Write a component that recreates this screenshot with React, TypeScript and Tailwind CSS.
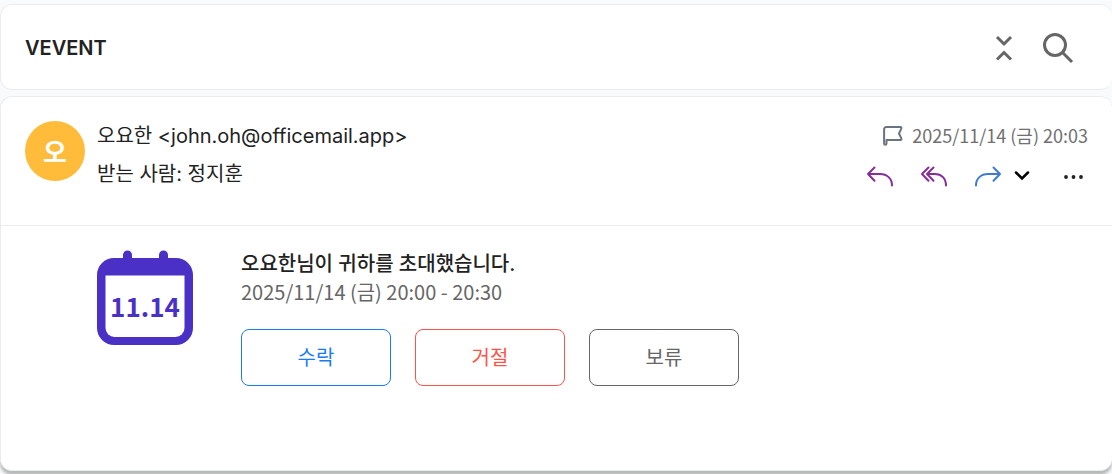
import type { ReactNode } from "react";

const ACTION_ICON =
  "h-7 w-7 fill-none stroke-[2] [stroke-linecap:round] [stroke-linejoin:round]";

function IconButton({
  label,
  className,
  children,
}: {
  label: string;
  className: string;
  children: ReactNode;
}) {
  return (
    <button type="button" aria-label={label} className={className}>
      {children}
    </button>
  );
}

function CalendarBadge({ date }: { date: string }) {
  return (
    <div className="relative h-24 w-24 shrink-0">
      <svg viewBox="0 0 96 96" className="h-24 w-24" aria-hidden="true">
        <rect x="26" y="0.500" width="9" height="20" rx="4.500" fill="#4b30c5" />
        <rect x="62" y="0.500" width="9" height="20" rx="4.500" fill="#4b30c5" />
        <rect x="0" y="8" width="96" height="87" rx="17" fill="#4b30c5" />
        <path
          d="M8.500 25.500h79v52.500a9 9 0 0 1-9 9h-61a9 9 0 0 1-9-9z"
          fill="#fff"
        />
      </svg>
      <span className="absolute inset-x-0 top-10 text-center font-['Noto_Sans_CJK_KR',sans-serif] text-[26px] leading-8 font-bold text-[#4b30c5]">
        {date}
      </span>
    </div>
  );
}

function MailToolbar() {
  return (
    <div className="flex items-center">
      <IconButton label="답장" className="mr-[26px] text-[#852e9a]">
        <svg viewBox="0 0 28 28" className={ACTION_ICON} stroke="currentColor">
          <path d="M8.500 4.500 2 11l6.500 6.800M2 11h12c7 0 12 4.500 12 11.500" />
        </svg>
      </IconButton>
      <IconButton label="전체 답장" className="mr-[26px] text-[#852e9a]">
        <svg viewBox="0 0 28 28" className={ACTION_ICON} stroke="currentColor">
          <path d="M8.500 4.500 2 11l6.500 6.800M13.500 4.500 7 11l6.500 6.800M7 11h8c6.500 0 11 4.500 11 11.500" />
        </svg>
      </IconButton>
      <IconButton label="전달" className="mr-2 text-[#3f7bd0]">
        <svg viewBox="0 0 28 28" className={ACTION_ICON} stroke="currentColor">
          <path d="m19.500 4.500 6.500 6.500-6.500 6.800M26 11H14C7 11 2 15.500 2 22.500" />
        </svg>
      </IconButton>
      <IconButton label="전달 옵션" className="mr-[26px] text-black">
        <svg
          viewBox="0 0 24 24"
          className="h-6 w-6 fill-none stroke-[2.5] [stroke-linecap:round]"
          stroke="currentColor"
        >
          <path d="m6 7.500 6 6 6-6" />
        </svg>
      </IconButton>
      <IconButton label="더보기" className="text-[#222]">
        <svg viewBox="0 0 28 28" className="h-7 w-7" fill="currentColor">
          <circle cx="6" cy="14" r="1.900" />
          <circle cx="13.500" cy="14" r="1.900" />
          <circle cx="21" cy="14" r="1.900" />
        </svg>
      </IconButton>
    </div>
  );
}

const replies = [
  { label: "수락", className: "border-[#1a7cf5] text-[#1a7cf5]" },
  { label: "거절", className: "border-[#ff5349] text-[#ff5349]" },
  { label: "보류", className: "border-[#666] text-[#666]" },
];

export default function App() {
  return (
    <div className="min-h-screen bg-[#f9fafb] pt-1 pb-[3px] font-['Inter','Noto_Sans_CJK_KR',sans-serif] text-xl text-[#222]">
      <header className="flex items-center justify-between rounded-xl border border-r-0 border-[#ebecee] bg-white px-6 py-5">
        <h1 className="pt-0.5 text-xl font-semibold">VEVENT</h1>
        <div className="flex items-center gap-2.5 pr-2 text-[#666]">
          <IconButton label="접기" className="p-1">
            <svg
              viewBox="0 0 36 36"
              className="h-9 w-9 fill-none stroke-[3]"
              stroke="currentColor"
            >
              <path d="m11 8 7 7 7-7M11 30.500l7-7 7 7" />
            </svg>
          </IconButton>
          <IconButton label="검색" className="p-1">
            <svg
              viewBox="0 0 36 36"
              className="h-9 w-9 fill-none stroke-[3]"
              stroke="currentColor"
            >
              <circle cx="15" cy="16" r="10.500" />
              <path d="m22.500 23.500 9.500 9.500" />
            </svg>
          </IconButton>
        </div>
      </header>

      <article className="mt-1.5 rounded-xl border border-r-0 border-[#ebecee] bg-white shadow-[0_4px_3px_#b8bab9]">
        <div className="flex items-start gap-3 border-b border-[#ebecee] px-6 pt-6 pb-[34px]">
          <div className="flex h-[60px] w-[60px] shrink-0 items-center justify-center rounded-full bg-[#ffbc3b] pt-1 text-[26px] font-semibold text-white">
            오
          </div>
          <div className="flex-1 pt-px">
            <p className="leading-7">오요한 &lt;john.oh@officemail.app&gt;</p>
            <p className="mt-2.5 leading-7">받는 사람: 정지훈</p>
          </div>
          <div className="flex flex-col items-end">
            <div className="flex items-center gap-2 font-['Noto_Sans_CJK_KR',sans-serif] text-lg leading-7 text-[#707070]">
              <svg
                viewBox="0 0 24 24"
                className="h-6 w-6 fill-none stroke-[2] [stroke-linejoin:round]"
                stroke="#6b7280"
                aria-hidden="true"
              >
                <path d="M6.500 17v3.500a1.200 1.200 0 0 1-2.400 0V6.200a2.200 2.200 0 0 1 2.200-2.200H20.500a1 1 0 0 1 .9 1.400L19 10.500l2.400 5.100a1 1 0 0 1-.9 1.400z" />
              </svg>
              <time>2025/11/14 (금) 20:03</time>
            </div>
            <div className="mt-3.5">
              <MailToolbar />
            </div>
          </div>
        </div>

        <div className="flex gap-12 px-24 pt-6 pb-[84px]">
          <CalendarBadge date="11.14" />
          <div>
            <p className="leading-7 font-medium">오요한님이 귀하를 초대했습니다.</p>
            <p className="font-['Noto_Sans_CJK_KR',sans-serif] leading-7 text-[#666]">
              2025/11/14 (금) 20:00 - 20:30
            </p>
            <div className="mt-[23px] flex gap-6">
              {replies.map(({ label, className }) => (
                <button
                  key={label}
                  type="button"
                  className={`h-[57px] w-[150px] rounded-lg border ${className}`}
                >
                  {label}
                </button>
              ))}
            </div>
          </div>
        </div>
      </article>
    </div>
  );
}
